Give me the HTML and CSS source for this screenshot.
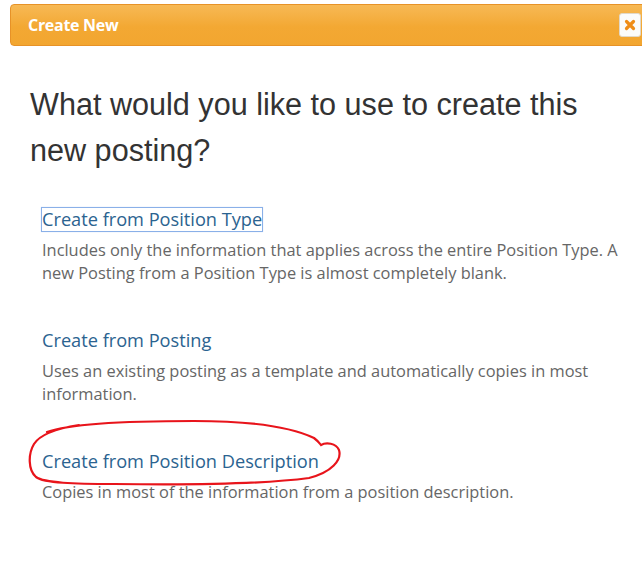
FILE: index.html
```html
<!DOCTYPE html>
<html lang="en">
<head>
<meta charset="utf-8">
<title>Create New</title>
<link rel="stylesheet" href="styles.css">
</head>
<body>
<div class="dialog">
  <div class="titlebar">
    <span class="titlebar-text">Create New</span>
    <button class="close" type="button" aria-label="Close">
      <svg width="12" height="12" viewBox="0 0 12 12"><path d="M2.5 2.5 L9.5 9.5 M9.5 2.5 L2.5 9.5" stroke="#ef8c16" stroke-width="3.2" stroke-linecap="round"/></svg>
    </button>
  </div>
  <div class="content">
    <h1 class="question">What would you like to use to create this new posting?</h1>
    <ul class="options">
      <li class="option">
        <a class="option-link focused" href="#">Create from Position Type</a>
        <p class="option-desc">Includes only the information that applies across the entire Position Type. A new Posting from a Position Type is almost completely blank.</p>
      </li>
      <li class="option">
        <a class="option-link" href="#">Create from Posting</a>
        <p class="option-desc">Uses an existing posting as a template and automatically copies in most information.</p>
      </li>
      <li class="option">
        <a class="option-link" href="#">Create from Position Description</a>
        <p class="option-desc">Copies in most of the information from a position description.</p>
        <svg class="scribble" width="324" height="74" viewBox="0 0 324 74">
          <path d="M23 16 C45 8 100 5 170 5 C220 5 265 10 290 22 C294 25 296 28 297 29 C302 26 312 27 315 34 C318 44 308 56 285 62 C240 68 160 69 90 68 C50 68 20 67 12 61 C4 54 4 38 10 28 C15 20 30 13 55 9" fill="none" stroke="#e8141b" stroke-width="2.2" stroke-linecap="round"/>
        </svg>
      </li>
    </ul>
  </div>
</div>
</body>
</html>
```
FILE: styles.css
```css
html, body {
  margin: 0;
  padding: 0;
  background: #ffffff;
}

body {
  width: 642px;
  height: 564px;
  overflow: hidden;
}

.dialog {
  padding: 4px 0 0 10px;
}

.titlebar {
  height: 40px;
  margin-right: -14px;
  border: 1px solid #e79227;
  border-radius: 4px;
  background: linear-gradient(#f7b955, #f3a833 55%, #f2a630);
  display: flex;
  align-items: center;
  justify-content: space-between;
  padding: 0 14px 0 17px;
}

.titlebar-text {
  font-family: "Open Sans", "DejaVu Sans", sans-serif;
  font-weight: 700;
  font-size: 16px;
  color: #ffffff;
  letter-spacing: -0.3px;
}

.close {
  width: 22px;
  height: 24px;
  padding: 0;
  border: 1px solid #e1d8c8;
  border-radius: 3px;
  background: #fbfbfa;
  display: flex;
  align-items: center;
  justify-content: center;
}

.content {
  padding: 0 0 0 20px;
}

.question {
  margin: 35px 0 0 0;
  font-family: "Liberation Sans", Arial, sans-serif;
  font-weight: 400;
  font-size: 30.6px;
  line-height: 46px;
  color: #333333;
  width: 570px;
}

.options {
  list-style: none;
  margin: 35px 0 0 0;
  padding: 0 0 0 12px;
}

.option {
  position: relative;
  margin-bottom: 45px;
}

.option-link {
  display: inline-block;
  font-family: "Open Sans", "DejaVu Sans", sans-serif;
  font-size: 18.2px;
  line-height: 23px;
  color: #2b6390;
  text-decoration: none;
}

.option-link.focused {
  outline: 1px solid #8ab0e8;
  box-shadow: 0 0 1px 1px #c9dcf7;
}

.option-desc {
  margin: 7px 0 0 0;
  font-family: "Open Sans", "DejaVu Sans", sans-serif;
  font-size: 16.4px;
  line-height: 23px;
  color: #666666;
  width: 580px;
}

.scribble {
  position: absolute;
  left: -18px;
  top: -34px;
}
```
